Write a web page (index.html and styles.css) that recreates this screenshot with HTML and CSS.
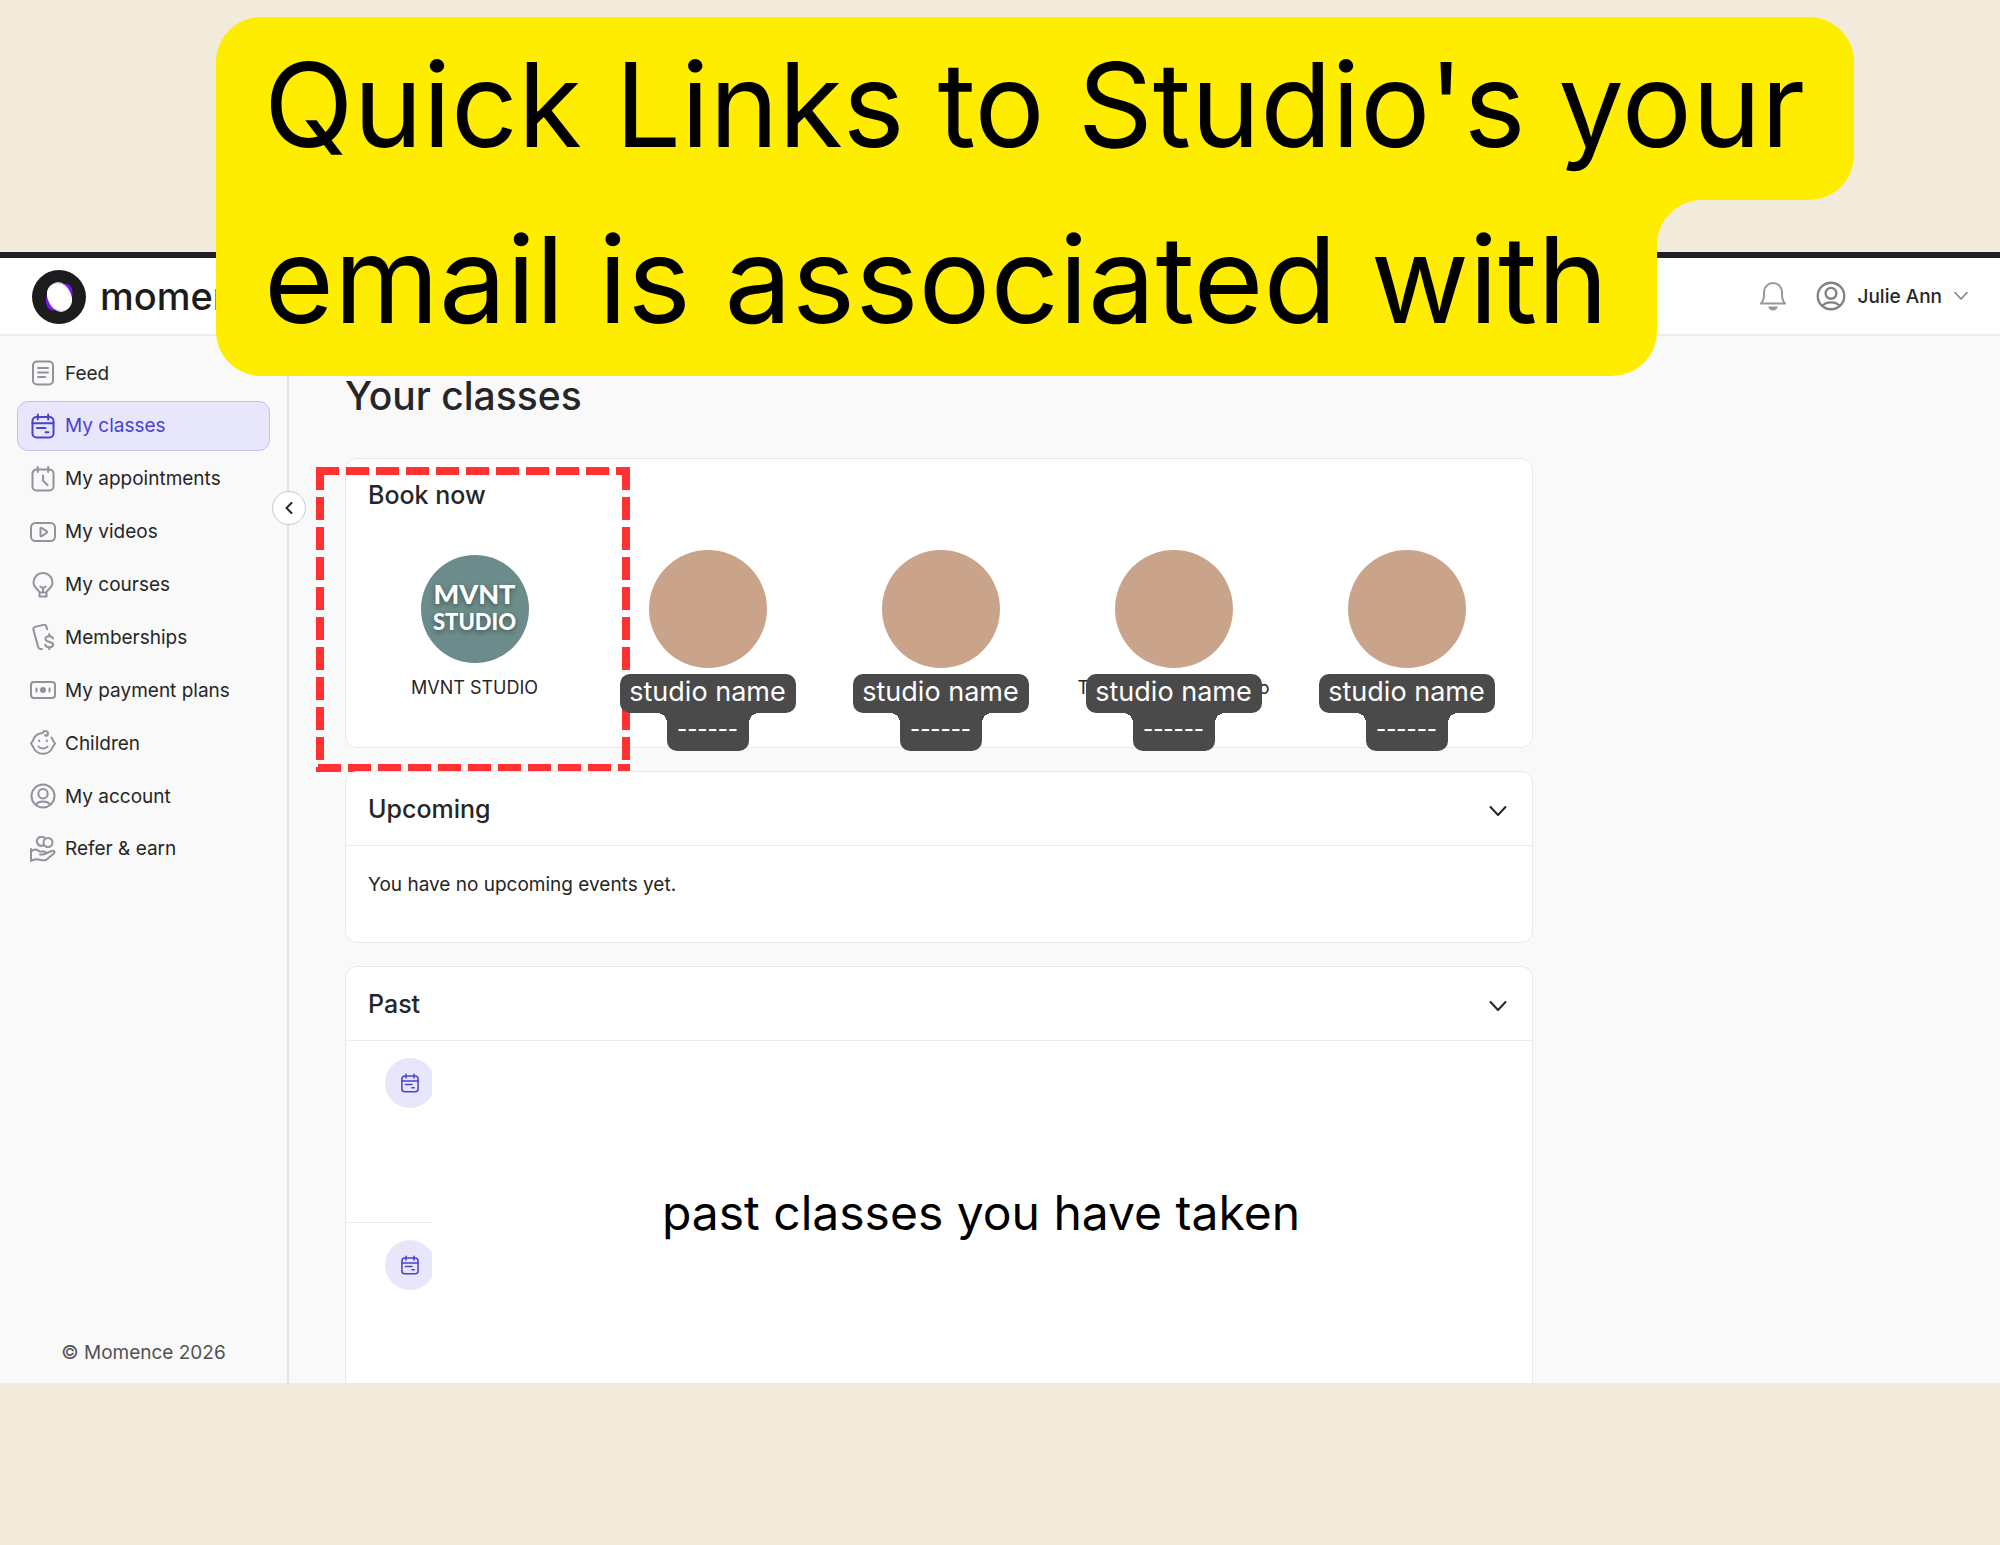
FILE: index.html
```html
<!DOCTYPE html>
<html lang="en">
<head>
<meta charset="utf-8">
<meta name="viewport" content="width=device-width, initial-scale=1">
<title>Momence – Your classes</title>
<link rel="stylesheet" href="styles.css">
</head>
<body>
<svg class="symbols" aria-hidden="true">
  <symbol id="calendar" viewBox="0 0 26 26">
    <rect x="2.500" y="4" width="21" height="20.500" rx="4"/><path d="M2.500 10.300h21M7.800 1.500v5M18.200 1.500v5M7 15h8.500M15.500 19.200h3"/>
  </symbol>
  <symbol id="person" viewBox="0 0 26 26">
    <circle cx="13" cy="13" r="11.500"/><circle cx="13" cy="10.700" r="4.700"/><path d="M5.500 21.500c3.500-4 11.500-4 15 0"/>
  </symbol>
</svg>

<div class="app">
  <header class="topbar">
    <a class="brand" href="#">
      <svg class="brand-mark" viewBox="0 0 54 54" aria-hidden="true">
        <circle cx="27" cy="27" r="27" fill="#1c1c1c"/>
        <path d="M31 14.500c4-1.500 8 .5 9 4.500s.5 8-1 11L30 20z" fill="#7a12ff"/>
        <path d="M15 25c-1.500 5-1.500 9 .5 12s4 3.500 6.500 3.500L26 34z" fill="#7a12ff"/>
        <ellipse cx="27.500" cy="27" rx="11.500" ry="15" transform="rotate(-12 27.500 27)" fill="#d3c3ee"/>
        <ellipse cx="27.500" cy="27" rx="11.500" ry="14.500" transform="rotate(-35 27.500 27)" fill="#fff"/>
      </svg>
      <span class="brand-name">momence</span>
    </a>
    <div class="account">
      <button class="icon-button" aria-label="Notifications">
        <svg class="bell" viewBox="0 0 28 30" aria-hidden="true"><path d="M2 22.500c2.500-2.500 3-5 3-9v-2.500a9 9 0 0 1 18 0v2.500c0 4 .5 6.500 3 9z"/><path class="solid" d="M9 25.500h10c-1 2.500-2.500 4-5 4s-4-1.500-5-4z"/></svg>
      </button>
      <button class="user">
        <svg class="user-icon" aria-hidden="true"><use href="#person"/></svg>
        <span>Julie Ann</span>
        <svg class="user-chevron" viewBox="0 0 14 10" aria-hidden="true"><path d="M1 1.500l6 6.500 6-6.500"/></svg>
      </button>
    </div>
  </header>

  <div class="body">
    <aside class="sidebar">
      <nav class="nav">
        <a href="#"><svg viewBox="0 0 26 26"><rect x="3" y="1.500" width="20" height="23" rx="4"/><path d="M8 8h10M8 12.500h10M8 17h7"/></svg>Feed</a>
        <a href="#" class="active" aria-current="page"><svg><use href="#calendar"/></svg>My classes</a>
        <a href="#"><svg viewBox="0 0 26 26"><path d="M8 3.500H6.500a4 4 0 0 0-4 4v13a4 4 0 0 0 4 4h13a4 4 0 0 0 4-4v-13a4 4 0 0 0-4-4H18M8 3.500h10M7.800 1v5M18.200 1v5M13 9.500v5l4.500 4.500"/></svg>My appointments</a>
        <a href="#"><svg viewBox="0 0 26 26"><rect x="1" y="4" width="24" height="18" rx="4.500"/><path d="M10.500 9.500v7c0 .8.700 1 1.300.700l4.700-3.200c.8-.5.8-1.300 0-1.800l-4.700-3.200c-.6-.4-1.300-.2-1.300.5z"/></svg>My videos</a>
        <a href="#"><svg viewBox="0 0 26 26"><path d="M9.500 20.500c0-2.500-6-4.500-6-10a9.500 9.500 0 0 1 19 0c0 5.500-6 7.500-6 10zM9.500 20.500v4h7v-4M10.300 14.500l2.700 1.700 2.700-1.700M13 16.500v4"/></svg>My courses</a>
        <a href="#"><svg viewBox="0 0 26 26"><path d="M12 25h-1.500c-1.500 0-2-.8-2.300-2L3.500 6c-.4-1.500.2-2.700 1.700-3.100l8.300-2c1.500-.4 2.600.3 3 1.800l.7 2.600"/><path d="M23 14.500c-.5-1.600-2-2.300-3.700-2.300-2.300 0-3.800 1-3.800 2.800 0 4 7.700 2 7.700 5.500 0 1.700-1.600 2.700-3.900 2.700-2 0-3.600-.8-4.100-2.500M19.300 10v2.200M19.300 23.200v2.500"/></svg>Memberships</a>
        <a href="#"><svg viewBox="0 0 26 26"><rect x="1" y="5" width="24" height="16" rx="3"/><circle cx="13" cy="13" r="2" fill="currentColor"/><path d="M6.500 11.500v3M19.500 11.500v3"/></svg>My payment plans</a>
        <a href="#"><svg viewBox="0 0 26 26"><path d="M12.500 3A10.500 10.500 0 0 0 3 10.500L1 13.500l2 3a10.500 10.500 0 0 0 20 0l2-3-2-3a10 10 0 0 0-1.500-3M13 2.500c1-2 5-2 5 1s-3 2.500-3 1.500"/><path d="M9.200 10.500v.7M16.800 10.500v.7M8.500 16.500c2 2.500 7 2.500 9 0"/></svg>Children</a>
        <a href="#"><svg><use href="#person"/></svg>My account</a>
        <a href="#"><svg viewBox="0 0 26 26"><path d="M13 9.500a4.500 4.500 0 1 1 2-7"/><circle cx="18" cy="6.500" r="4.500"/><path d="M1 13v12M1 15.500c3-2.500 6-2.500 8.500 0h4.500c2 0 2 3-.5 3H10M14.500 18l7-3c2.500-1 4 1 2 2.800L16 24c-4 1.500-8-2-11-.5l-4 1"/></svg>Refer &amp; earn</a>
      </nav>
      <footer class="copyright">© Momence 2026</footer>
      <button class="collapse" aria-label="Collapse menu"><svg viewBox="0 0 8 12" aria-hidden="true"><path d="M6.500 1L1.500 6l5 5"/></svg></button>
    </aside>

    <main class="main">
      <h1>Your classes</h1>

      <section class="card book">
        <h2>Book now</h2>
        <ul class="studios">
          <li><a class="studio" href="#"><span class="logo"><span class="logo-a">MVNT</span><span class="logo-b">STUDIO</span></span><span class="name">MVNT STUDIO</span></a></li>
          <li><a class="studio" href="#"><span class="avatar"></span><span class="tag"><span class="tag-top">studio name</span><span class="tag-bottom">------</span></span></a></li>
          <li><a class="studio" href="#"><span class="avatar"></span><span class="tag"><span class="tag-top">studio name</span><span class="tag-bottom">------</span></span></a></li>
          <li><a class="studio" href="#"><span class="avatar"></span><span class="name covered"><span>T</span><span>o</span></span><span class="tag"><span class="tag-top">studio name</span><span class="tag-bottom">------</span></span></a></li>
          <li><a class="studio" href="#"><span class="avatar"></span><span class="tag"><span class="tag-top">studio name</span><span class="tag-bottom">------</span></span></a></li>
        </ul>
        <svg class="highlight" viewBox="0 0 314 305" aria-hidden="true">
          <path d="M0 4h314M310 0v305M2 301h312M4 0v305"/>
        </svg>
      </section>

      <section class="card">
        <div class="card-head"><h2>Upcoming</h2><button class="toggle" aria-label="Toggle upcoming"><svg viewBox="0 0 18 12" aria-hidden="true"><path d="M1.500 2l7.500 8 7.500-8"/></svg></button></div>
        <p class="empty">You have no upcoming events yet.</p>
      </section>

      <section class="card past">
        <div class="card-head"><h2>Past</h2><button class="toggle" aria-label="Toggle past"><svg viewBox="0 0 18 12" aria-hidden="true"><path d="M1.500 2l7.500 8 7.500-8"/></svg></button></div>
        <div class="past-body">
          <div class="rows">
            <div class="row"><span class="badge"><svg><use href="#calendar"/></svg></span></div>
            <div class="row"><span class="badge"><svg><use href="#calendar"/></svg></span></div>
          </div>
          <p class="note">past classes you have taken</p>
        </div>
      </section>
    </main>
  </div>
</div>

<div class="banner"><span class="line line-one">Quick Links to Studio's your</span><span class="line line-two">email is associated with</span></div>
</body>
</html>
```
FILE: styles.css
```css
* { box-sizing: border-box; }

body {
  margin: 0;
  min-height: 100vh;
  padding: 252px 0 162px;
  position: relative;
  background: #f2ebdc;
  color: #262626;
  font-family: Inter, "Liberation Sans", sans-serif;
  font-size: 19px;
}

h1, h2, p, ul { margin: 0; padding: 0; }
a { color: inherit; text-decoration: none; }
button { padding: 0; border: 0; background: none; color: inherit; font: inherit; }
svg { display: block; fill: none; stroke: currentColor; stroke-width: 2; stroke-linecap: round; stroke-linejoin: round; }
.symbols { position: absolute; width: 0; height: 0; }

.app { border-top: 6px solid #202022; background: #f9f9f9; }

.topbar {
  display: flex;
  align-items: center;
  justify-content: space-between;
  height: 78px;
  padding: 0 32px;
  border-bottom: 2px solid #ececec;
  background: #fff;
}
.brand { display: flex; align-items: center; gap: 14px; padding-top: 2px; color: #1c1c1c; }
.brand-mark { width: 54px; height: 54px; stroke: none; }
.brand-name { padding-bottom: 2px; font-size: 38px; font-weight: 500; line-height: 52px; }
.account { display: flex; align-items: center; gap: 29px; }
.bell { width: 28px; height: 30px; color: #98989c; }
.bell .solid { fill: currentColor; stroke: none; }
.user { display: flex; align-items: center; gap: 12px; font-weight: 500; }
.user-icon { width: 30px; height: 30px; color: #808080; }
.user-chevron { width: 14px; height: 10px; color: #808080; stroke-width: 1.500; }

.body { display: flex; }

.sidebar {
  position: relative;
  display: flex;
  flex: 0 0 289px;
  flex-direction: column;
  justify-content: space-between;
  padding: 12px 17px 15px;
  border-right: 2px solid #e4e4e6;
}
.nav { display: flex; flex-direction: column; justify-content: space-between; height: 526px; }
.nav a {
  display: flex;
  align-items: center;
  gap: 9px;
  height: 50px;
  padding: 0 12px;
  border: 1px solid transparent;
  border-radius: 11px;
}
.nav svg { width: 26px; height: 26px; color: #92919e; }
.nav .active { border-color: #c5c0f2; background: #e8e6fb; color: #4a42d1; }
.nav .active svg { color: inherit; }
.copyright { color: #525252; line-height: 30px; text-align: center; }
.collapse {
  position: absolute;
  top: 155px;
  right: -19px;
  display: grid;
  place-items: center;
  width: 34px;
  height: 34px;
  border: 1px solid #c9c9cd;
  border-radius: 50%;
  background: #fff;
}
.collapse svg { width: 8px; height: 12px; }

.main { flex: 1; min-width: 0; padding: 36px 56px 0; }
h1 { margin-bottom: 38px; font-size: 39px; font-weight: 500; line-height: 48px; }
h2 { font-size: 25px; font-weight: 500; line-height: 32px; }

.card {
  position: relative;
  max-width: 1188px;
  margin-bottom: 23px;
  border: 1px solid #e9e9ea;
  border-radius: 12px;
  background: #fff;
}
.card-head {
  display: flex;
  align-items: center;
  justify-content: space-between;
  height: 74px;
  padding: 0 25px 0 22px;
  border-bottom: 1px solid #ececed;
}
.toggle { padding-top: 4px; }
.toggle svg { width: 18px; height: 12px; }
.empty { padding: 25px 22px 43px; line-height: 28px; }

.book { height: 290px; padding: 20px 9px 0 12px; }
.book h2 { padding-left: 10px; }
.studios { display: grid; grid-template-columns: repeat(5, 1fr); margin-top: 39px; list-style: none; }
.studio { position: relative; display: flex; flex-direction: column; align-items: center; }
.avatar { width: 118px; height: 118px; border-radius: 50%; background: #c9a48b; }
.logo {
  display: flex;
  flex-direction: column;
  align-items: center;
  justify-content: center;
  width: 108px;
  height: 108px;
  margin: 5px 0;
  padding-bottom: 4px;
  border-radius: 50%;
  background: #6b8c8a;
  color: #fff;
  font-family: Lato, sans-serif;
  font-weight: 900;
  text-shadow: 0 2px 5px rgb(0 0 0 / 40%);
}
.logo-a { font-size: 27px; line-height: 30px; }
.logo-b { font-size: 22px; line-height: 26px; }
.name { margin-top: 8px; font-size: 18px; line-height: 24px; }
.covered { display: flex; justify-content: space-between; width: 192px; }
.tag {
  position: absolute;
  z-index: 1;
  top: 124px;
  display: flex;
  flex-direction: column;
  align-items: center;
  color: #fff;
}
.tag-top {
  width: 176px;
  padding-bottom: 4px;
  border-radius: 10px;
  background: #4a4a4a;
  font-size: 27px;
  line-height: 35px;
  text-align: center;
}
.tag-bottom {
  position: relative;
  width: 82px;
  padding-bottom: 6px;
  border-radius: 0 0 10px 10px;
  background: #4a4a4a;
  font-size: 22px;
  font-weight: 500;
  line-height: 32px;
  text-align: center;
}
.tag-bottom::before, .tag-bottom::after {
  content: "";
  position: absolute;
  top: 0;
  width: 10px;
  height: 10px;
}
.tag-bottom::before { right: 100%; background: radial-gradient(circle at 0 100%, transparent 10px, #4a4a4a 10px); }
.tag-bottom::after { left: 100%; background: radial-gradient(circle at 100% 100%, transparent 10px, #4a4a4a 10px); }
.highlight {
  position: absolute;
  top: 8px;
  left: -30px;
  width: 314px;
  height: 305px;
  color: #ff3131;
  stroke-width: 8;
  stroke-dasharray: 23 7;
  stroke-linecap: butt;
}

.past { margin-bottom: 0; border-bottom: 0; border-radius: 12px 12px 0 0; }
.past-body { display: flex; }
.rows { flex: 0 0 86px; min-width: 0; }
.row { height: 181px; padding: 17px 0 0 39px; overflow: hidden; }
.row + .row { height: 161px; border-top: 1px solid #ececed; }
.badge { display: grid; place-items: center; width: 50px; height: 50px; border-radius: 50%; background: #e8e6fb; color: #4a42d1; }
.badge svg { width: 20px; height: 20px; }
.note { flex: 1; padding: 142px 2px 0 0; color: #000; font-size: 48px; line-height: 60px; text-align: center; }

.banner {
  position: absolute;
  z-index: 2;
  top: 17px;
  left: 216px;
  display: flex;
  flex-direction: column;
  align-items: flex-start;
  color: #000;
  white-space: nowrap;
}
.line { padding: 0 48px; background: #ffed00; }
.line-one { width: 1638px; padding-bottom: 7px; border-radius: 45px 45px 45px 0; font-size: 117px; line-height: 176px; }
.line-two { position: relative; width: 1441px; padding-bottom: 16px; border-radius: 0 0 45px 45px; font-size: 120px; line-height: 160px; }
.line-two::after {
  content: "";
  position: absolute;
  top: 0;
  left: 100%;
  width: 45px;
  height: 45px;
  background: radial-gradient(circle at 100% 100%, transparent 45px, #ffed00 45px);
}
```
